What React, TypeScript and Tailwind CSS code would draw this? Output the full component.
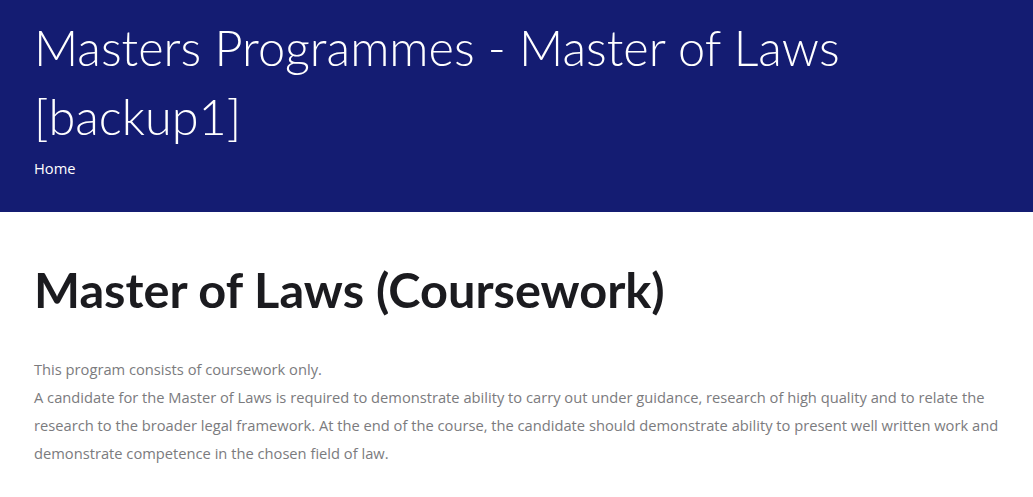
export default function App() {
  return (
    <div className="min-h-screen bg-white">
      <header className="bg-[#141c72] pl-[34px] pr-[13px] pt-[13px] pb-[34px] text-white">
        <h1 className="font-['Lato',sans-serif] text-[48.7px] font-light leading-[69px]">
          Masters Programmes - Master of Laws [backup1]
        </h1>
        <nav className="mt-[7px] font-['Open_Sans',sans-serif] text-[14.7px] leading-[20px]">
          Home
        </nav>
      </header>
      <main className="pl-[34px] pr-[13px] pt-[48px]">
        <h2 className="font-['Lato',sans-serif] text-[48.7px] font-bold leading-[58px] text-[#1b1b1f]">
          Master of Laws (Coursework)
        </h2>
        <p className="mt-[37px] font-['Open_Sans',sans-serif] text-[14.7px] leading-[28px] text-[#7b7b7e]">
          This program consists of coursework only.
          <br />
          A candidate for the Master of Laws is required to demonstrate ability to carry out under guidance, research of high
          quality and to relate the research to the broader legal framework. At the end of the course, the candidate should
          demonstrate ability to present well written work and demonstrate competence in the chosen field of law.
        </p>
      </main>
    </div>
  );
}
